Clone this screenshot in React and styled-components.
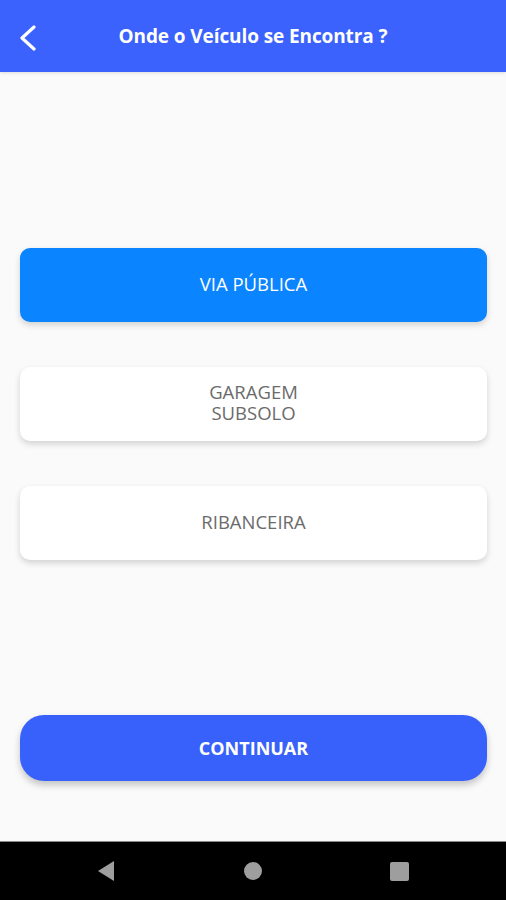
import React, { useState } from "react";
import styled, { createGlobalStyle } from "styled-components";

const GlobalStyle = createGlobalStyle`
  * { box-sizing: border-box; }
  body {
    margin: 0;
    font-family: "Open Sans", Roboto, sans-serif;
    background: #fafafa;
  }
`;

const options = [
  { id: "via", label: "VIA PÚBLICA" },
  { id: "garagem", label: "GARAGEM\nSUBSOLO" },
  { id: "ribanceira", label: "RIBANCEIRA" },
];

const App = () => {
  const [selected, setSelected] = useState("via");

  return (
    <Page>
      <GlobalStyle />
      <Header>
        <BackButton aria-label="Voltar">
          <svg width="20" height="26" viewBox="0 0 20 26" fill="none">
            <path
              d="M16 2 L4 13 L16 24"
              stroke="#fff"
              strokeWidth="3.2"
              strokeLinecap="round"
              strokeLinejoin="round"
            />
          </svg>
        </BackButton>
        <Title>Onde o Veículo se Encontra ?</Title>
      </Header>

      <Content>
        <Options>
          {options.map((opt) => (
            <Option
              key={opt.id}
              $active={selected === opt.id}
              onClick={() => setSelected(opt.id)}
            >
              {opt.label}
            </Option>
          ))}
        </Options>
        <ContinueButton>CONTINUAR</ContinueButton>
      </Content>

      <NavBar>
        <svg width="18" height="22" viewBox="0 0 18 22">
          <polygon points="17,1 17,21 1,11" fill="#9e9e9e" />
        </svg>
        <NavDot />
        <NavSquare />
      </NavBar>
    </Page>
  );
};

export default App;

const Page = styled.div`
  display: flex;
  flex-direction: column;
  min-height: 100vh;
  background: #fafafa;
`;

const Header = styled.header`
  position: relative;
  height: 72px;
  background: #3b62fc;
  display: flex;
  align-items: center;
  justify-content: center;
  box-shadow: 0 1px 3px rgba(0, 0, 0, 0.12);
`;

const BackButton = styled.button`
  position: absolute;
  left: 18px;
  top: 25px;
  padding: 0;
  border: none;
  background: none;
  display: flex;
  cursor: pointer;
`;

const Title = styled.h1`
  margin: 0;
  color: #fff;
  font-family: "Open Sans", Roboto, sans-serif;
  font-weight: 700;
  font-size: 19px;
  letter-spacing: -0.1px;
`;

const Content = styled.main`
  flex: 1;
  display: flex;
  flex-direction: column;
  padding: 176px 19px 60px 20px;
`;

const Options = styled.div`
  display: flex;
  flex-direction: column;
  gap: 45px;
`;

const Option = styled.button`
  height: 74px;
  padding: 0 0 4px;
  border: none;
  border-radius: 10px;
  background: ${(p) => (p.$active ? "#0a84ff" : "#ffffff")};
  color: ${(p) => (p.$active ? "#ffffff" : "#6b6b6b")};
  font-family: "Open Sans", Roboto, sans-serif;
  font-size: 18.5px;
  line-height: 21px;
  white-space: pre-line;
  box-shadow: 0 3px 6px rgba(0, 0, 0, 0.16);
  cursor: pointer;
`;

const ContinueButton = styled.button`
  margin-top: auto;
  height: 66px;
  border: none;
  border-radius: 24px;
  background: #3861fb;
  color: #fff;
  font-family: "Open Sans", Roboto, sans-serif;
  font-weight: 700;
  font-size: 18px;
  box-shadow: 0 4px 7px rgba(0, 0, 0, 0.22);
  cursor: pointer;
`;

const NavBar = styled.nav`
  height: 59px;
  background: #000;
  border-top: 1px solid #8a8a8a;
  display: grid;
  grid-template-columns: repeat(3, 1fr);
  padding: 0 33px;
  align-items: center;
  justify-items: center;
`;

const NavDot = styled.span`
  width: 18px;
  height: 18px;
  border-radius: 50%;
  background: #9e9e9e;
`;

const NavSquare = styled.span`
  width: 19px;
  height: 19px;
  border-radius: 2px;
  background: #9e9e9e;
`;
